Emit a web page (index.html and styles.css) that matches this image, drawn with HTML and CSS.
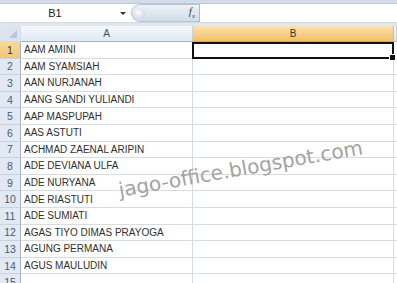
FILE: index.html
```html
<!DOCTYPE html>
<html lang="id">
<head>
    <meta charset="UTF-8">
    <meta name="viewport" content="width=device-width, initial-scale=1.0">
    <title>Daftar Nama</title>
    <link rel="stylesheet" href="styles.css">
</head>
<body>
    <div class="window">
        <div class="ribbon-edge"></div>
        <div class="formula-bar">
            <div class="name-box">
                <span class="cell-ref">B1</span>
                <span class="arrow"></span>
            </div>
            <div class="fx-box">
                <span class="knob"></span>
                <span class="fx">f<sub>x</sub></span>
            </div>
            <div class="formula-input"></div>
        </div>
        <div class="bar-gap"></div>

        <div class="sheet">
            <div class="row head">
                <div class="corner"><span class="tri"></span></div>
                <div class="col-head">A</div>
                <div class="col-head active">B</div>
                <div class="col-head"></div>
            </div>
            <div class="row"><div class="num active">1</div><div class="cell">AAM AMINI</div><div class="cell selected"><span class="handle"></span></div><div class="cell"></div></div>
            <div class="row"><div class="num">2</div><div class="cell">AAM SYAMSIAH</div><div class="cell"></div><div class="cell"></div></div>
            <div class="row"><div class="num">3</div><div class="cell">AAN NURJANAH</div><div class="cell"></div><div class="cell"></div></div>
            <div class="row"><div class="num">4</div><div class="cell">AANG SANDI YULIANDI</div><div class="cell"></div><div class="cell"></div></div>
            <div class="row"><div class="num">5</div><div class="cell">AAP MASPUPAH</div><div class="cell"></div><div class="cell"></div></div>
            <div class="row"><div class="num">6</div><div class="cell">AAS ASTUTI</div><div class="cell"></div><div class="cell"></div></div>
            <div class="row"><div class="num">7</div><div class="cell">ACHMAD ZAENAL ARIPIN</div><div class="cell"></div><div class="cell"></div></div>
            <div class="row"><div class="num">8</div><div class="cell">ADE DEVIANA ULFA</div><div class="cell"></div><div class="cell"></div></div>
            <div class="row"><div class="num">9</div><div class="cell">ADE NURYANA</div><div class="cell"></div><div class="cell"></div></div>
            <div class="row"><div class="num">10</div><div class="cell">ADE RIASTUTI</div><div class="cell"></div><div class="cell"></div></div>
            <div class="row"><div class="num">11</div><div class="cell">ADE SUMIATI</div><div class="cell"></div><div class="cell"></div></div>
            <div class="row"><div class="num">12</div><div class="cell">AGAS TIYO DIMAS PRAYOGA</div><div class="cell"></div><div class="cell"></div></div>
            <div class="row"><div class="num">13</div><div class="cell">AGUNG PERMANA</div><div class="cell"></div><div class="cell"></div></div>
            <div class="row"><div class="num">14</div><div class="cell">AGUS MAULUDIN</div><div class="cell"></div><div class="cell"></div></div>
            <div class="row"><div class="num">15</div><div class="cell"></div><div class="cell"></div><div class="cell"></div></div>
        </div>

        <div class="watermark">jago-office.blogspot.com</div>
    </div>
</body>
</html>
```

FILE: styles.css
```css
body {
    margin: 0;
    padding: 0;
    background-color: #fff;
    font-family: "Liberation Sans", Arial, sans-serif;
    color: #333;
}
.window {
    position: relative;
    width: 397px;
    height: 283px;
    overflow: hidden;
}
.ribbon-edge {
    height: 3px;
    background-color: #d3dce8;
    border-bottom: 1px solid #b9c8da;
}

/* formula bar */
.formula-bar {
    display: flex;
    height: 18px;
    background-color: #fff;
}
.name-box {
    width: 131px;
    display: flex;
    align-items: center;
    position: relative;
}
.cell-ref {
    width: 110px;
    text-align: center;
    font-size: 11px;
    color: #222;
}
.arrow {
    margin-left: 10px;
    width: 0;
    height: 0;
    border-left: 3px solid transparent;
    border-right: 3px solid transparent;
    border-top: 3px solid #333;
}
.fx-box {
    width: 68px;
    display: flex;
    align-items: center;
    justify-content: space-between;
    padding: 0 4px 0 2px;
    box-sizing: border-box;
    border-radius: 9px 0 0 9px;
    background: linear-gradient(#eef2f8, #d2dce9);
    border: 1px solid #b4c3d6;
    border-right: none;
}
.knob {
    width: 11px;
    height: 11px;
    border-radius: 50%;
    background: radial-gradient(circle at 40% 40%, #fbfcfe, #c3cddb);
}
.fx {
    font-family: "Liberation Serif", serif;
    font-style: italic;
    font-size: 11px;
    color: #444;
}
.fx sub {
    font-size: 7px;
}
.formula-input {
    flex: 1;
    border-left: 1px solid #a9bbd1;
    background-color: #fff;
}
.bar-gap {
    height: 3px;
    background-color: #e1e7ef;
    border-top: 1px solid #d0d9e4;
}

/* grid */
.sheet {
    font-size: 10px;
}
.row {
    display: grid;
    grid-template-columns: 21px 172px 201px 1fr;
    height: 16.6px;
}
.row.head {
    height: 16px;
}
.row > div {
    box-sizing: border-box;
    border-right: 1px solid #d7dce3;
    border-bottom: 1px solid #d7dce3;
    display: flex;
    align-items: center;
    white-space: nowrap;
}
.corner {
    background-color: #dce4ee;
    position: relative;
}
.tri {
    position: absolute;
    right: 3px;
    bottom: 3px;
    width: 0;
    height: 0;
    border-left: 8px solid transparent;
    border-bottom: 8px solid #b8c6d8;
}
.row .col-head {
    justify-content: center;
    background: linear-gradient(#f5f8fc, #e1e9f3);
    border-right-color: #c5d2e2;
    border-bottom-color: #9fb4cc;
    color: #3e4e66;
    font-size: 10px;
}
.row .col-head.active {
    background: linear-gradient(#fae2b0, #f2c068);
    border-bottom-color: #e0a33e;
    border-right-color: #e6b565;
    color: #333;
}
.row .num {
    justify-content: center;
    background-color: #e2e9f2;
    border-right-color: #9fb4cc;
    border-bottom-color: #c6d3e2;
    color: #4a5b76;
    font-size: 10.5px;
}
.row .num.active {
    background: linear-gradient(#f9d898, #f4c675);
    color: #333;
}
.cell {
    padding-left: 3px;
    color: #2f2f2f;
}
.row .selected {
    position: relative;
    border: 2px solid #111;
    margin-left: -1px;
}
.handle {
    position: absolute;
    right: -4px;
    bottom: -4px;
    width: 5px;
    height: 5px;
    background-color: #111;
    border: 1px solid #fff;
}

.watermark {
    position: absolute;
    left: 120px;
    top: 180px;
    font-family: "DejaVu Sans", sans-serif;
    font-size: 20px;
    line-height: 20px;
    color: #a3a3a3;
    white-space: nowrap;
    transform: rotate(-10deg);
    transform-origin: 0 17px;
}
```
